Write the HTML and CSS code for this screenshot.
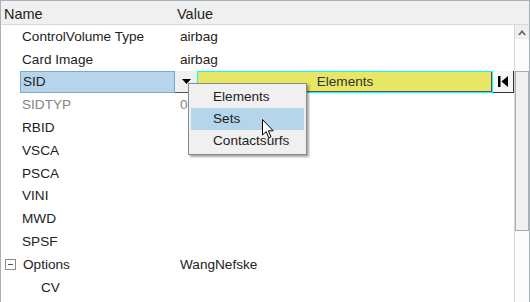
FILE: index.html
```html
<!DOCTYPE html>
<html lang="en">
<head>
    <meta charset="UTF-8">
    <meta name="viewport" content="width=device-width, initial-scale=1.0">
    <title>Properties</title>
    <link rel="stylesheet" href="styles.css">
</head>
<body>
    <div class="panel">
        <div class="header">
            <div class="col-name">Name</div>
            <div class="col-value">Value</div>
        </div>

        <div class="content">
            <div class="rows">
                <div class="row">
                    <div class="name">ControlVolume Type</div>
                    <div class="value">airbag</div>
                </div>
                <div class="row">
                    <div class="name">Card Image</div>
                    <div class="value">airbag</div>
                </div>
                <div class="row">
                    <div class="name name-selected">SID</div>
                    <div class="value editor">
                        <div class="drop-btn">
                            <svg width="9" height="5" viewBox="0 0 9 5"><polygon points="0,0 9,0 4.5,5" fill="#000"/></svg>
                        </div>
                        <div class="entity-field">Elements</div>
                        <div class="first-btn">
                            <svg width="10" height="11" viewBox="0 0 10 11"><rect x="0" y="0" width="2.5" height="11" fill="#000"/><polygon points="10,0 10,11 3.5,5.5" fill="#000"/></svg>
                        </div>
                    </div>
                </div>
                <div class="row">
                    <div class="name dim">SIDTYP</div>
                    <div class="value dim">0</div>
                </div>
                <div class="row"><div class="name">RBID</div><div class="value"></div></div>
                <div class="row"><div class="name">VSCA</div><div class="value"></div></div>
                <div class="row"><div class="name">PSCA</div><div class="value"></div></div>
                <div class="row"><div class="name">VINI</div><div class="value"></div></div>
                <div class="row"><div class="name">MWD</div><div class="value"></div></div>
                <div class="row"><div class="name">SPSF</div><div class="value"></div></div>
                <div class="row">
                    <div class="name group">
                        <span class="toggle"></span>Options
                    </div>
                    <div class="value">WangNefske</div>
                </div>
                <div class="row">
                    <div class="name child">CV</div>
                    <div class="value"></div>
                </div>

                <!-- menu opened from the SID drop button -->
                <div class="popup">
                    <div class="item">Elements</div>
                    <div class="item active">Sets</div>
                    <div class="item">Contactsurfs</div>
                </div>

                <svg class="cursor" width="12" height="20" viewBox="0 0 12 20">
                    <path d="M0.5,0.5 L0.5,16 L4.2,12.6 L6.8,18.8 L9,17.8 L6.4,11.8 L11.2,11.8 Z" fill="#fff" stroke="#000" stroke-width="1" stroke-linejoin="miter"/>
                </svg>
            </div>

            <div class="scrollbar">
                <div class="scroll-up">
                    <svg width="8" height="5" viewBox="0 0 8 5"><polygon points="0,5 4,0 8,5 6,5 4,2.5 2,5" fill="#606060"/></svg>
                </div>
                <div class="track-top"></div>
                <div class="thumb"></div>
            </div>
        </div>
    </div>
</body>
</html>
```

FILE: styles.css
```css
body {
    margin: 0;
    font-family: 'Liberation Sans', Arial, sans-serif;
    background: #fff;
    overflow: hidden;
}

.panel {
    width: 528px;
    height: 301px;
    border-top: 1px solid #a6b1bd;
    border-left: 1px solid #a6b1bd;
    border-right: 1px solid #a6b1bd;
    display: flex;
    flex-direction: column;
    overflow: hidden;
}

.header {
    height: 24px;
    flex-shrink: 0;
    background: #f0f0f0;
    border-bottom: 1px solid #d5d9de;
    display: flex;
    align-items: center;
    font-size: 14.5px;
    color: #1e1e1e;
    padding-top: 3px;
    box-sizing: border-box;
}

.col-name {
    width: 174px;
    padding-left: 3px;
    box-sizing: border-box;
}

.col-value {
    padding-left: 2px;
}

.content {
    flex: 1;
    display: flex;
    min-height: 0;
}

.rows {
    flex: 1;
    position: relative;
    font-size: 13.6px;
    color: #222;
}

.row {
    height: 22.8px;
    display: flex;
    align-items: center;
}

.name {
    width: 174px;
    padding-left: 21px;
    box-sizing: border-box;
    flex-shrink: 0;
}

.name-selected {
    height: 22px;
    margin-left: 19px;
    width: 155px;
    padding-left: 2px;
    background: #b6d5ea;
    border: 1px solid #80a9d0;
    display: flex;
    align-items: center;
}

.value {
    flex: 1;
    padding-left: 5px;
}

.dim {
    color: #848484;
}

.editor {
    padding-left: 0;
    height: 22px;
    display: flex;
}

.drop-btn {
    width: 22px;
    background: #f0f0f0;
    border-bottom: 1px solid #555;
    box-sizing: border-box;
    display: flex;
    align-items: center;
    justify-content: center;
    padding-top: 1px;
}

.entity-field {
    flex: 1;
    background: #e8e665;
    border: 1px solid #00ffff;
    box-shadow: inset -1px -1px 0 #555;
    display: flex;
    align-items: center;
    justify-content: center;
    color: #333;
}

.first-btn {
    width: 21px;
    background: #f6f6f6;
    border-right: 1px solid #333;
    border-bottom: 1px solid #333;
    box-sizing: border-box;
    display: flex;
    align-items: center;
    justify-content: center;
}

.group {
    padding-left: 4px;
    display: flex;
    align-items: center;
}

.toggle {
    width: 9px;
    height: 9px;
    border: 1px solid #8c8c8c;
    background: #fff;
    margin-right: 7px;
    position: relative;
}

.toggle::after {
    content: "";
    position: absolute;
    left: 2px;
    top: 4px;
    width: 5px;
    height: 1px;
    background: #555;
}

.child {
    padding-left: 40px;
}

.popup {
    position: absolute;
    left: 187px;
    top: 58px;
    width: 119px;
    padding: 2px 2px;
    box-sizing: border-box;
    background: #f0f0f0;
    border: 1px solid #8a8a8a;
    box-shadow: 2px 2px 2px rgba(0, 0, 0, 0.35);
}

.item {
    height: 22px;
    line-height: 22px;
    padding-left: 22px;
    color: #222;
}

.item.active {
    background: #b4d5ea;
}

.cursor {
    position: absolute;
    left: 261px;
    top: 94px;
}

.scrollbar {
    width: 15px;
    border-left: 1px solid #d3d7dc;
    box-sizing: border-box;
    display: flex;
    flex-direction: column;
    background: #fbfbfb;
}

.scroll-up {
    height: 14px;
    background: #eeeeee;
    display: flex;
    align-items: center;
    justify-content: center;
}

.track-top {
    height: 32px;
}

.thumb {
    height: 160px;
    background: #f0f0f0;
    border: 1px solid #a7aeb6;
    box-sizing: border-box;
}
```
